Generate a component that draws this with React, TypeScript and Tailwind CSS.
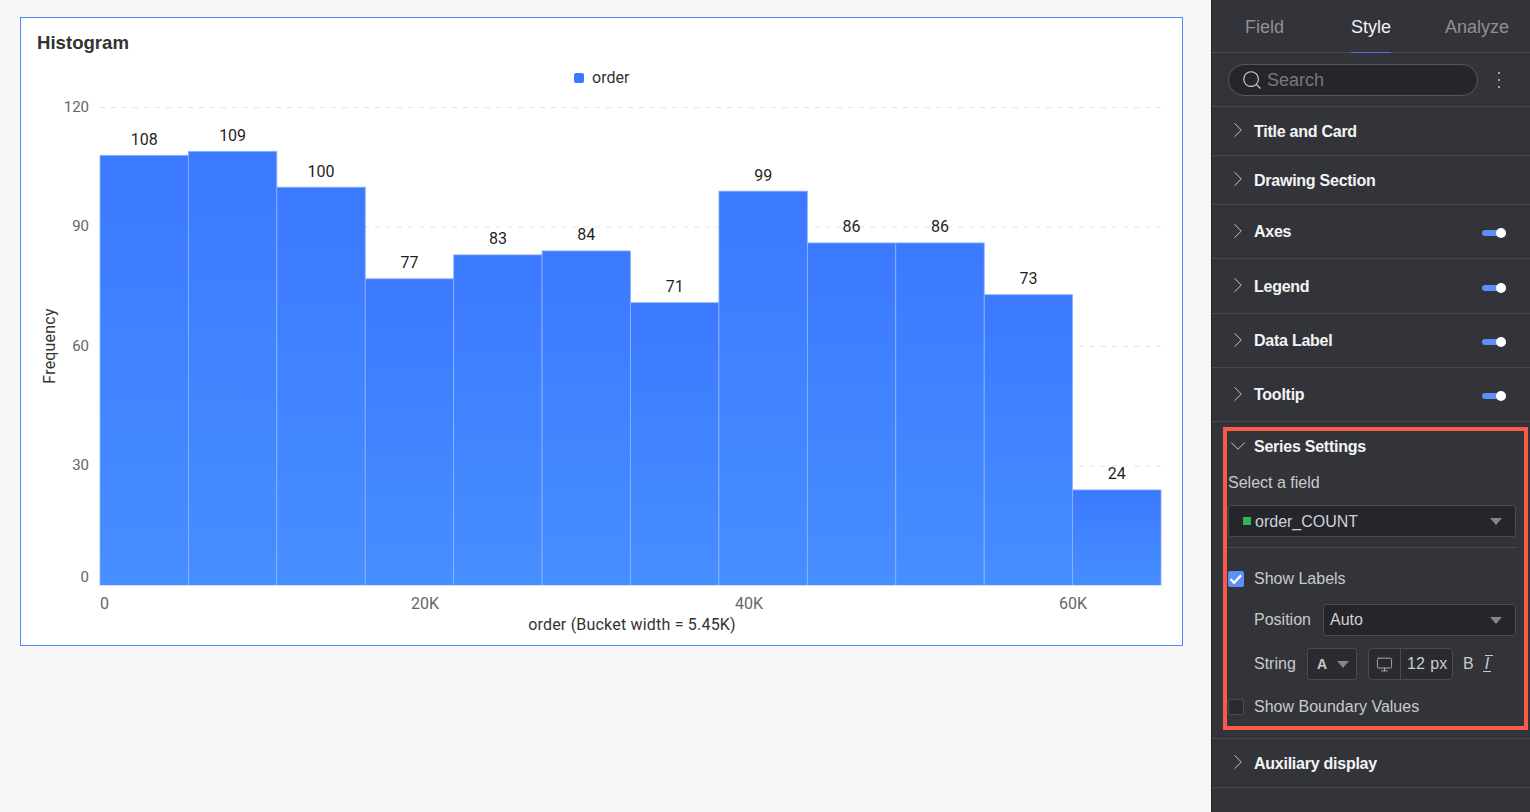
import { ChevronDown, ChevronRight, Monitor, Search } from "lucide-react";

const BARS = [108, 109, 100, 77, 83, 84, 71, 99, 86, 86, 73, 24];
const BAR_W = 88.42;
const X0 = 100;
// svg starts 60px below the page top, 21px from the left
const OX = 21;
const OY = 60;
const BASE = 585.5;
const SCALE = 478 / 120;

function Chart() {
  return (
    <svg width={1161} height={584} className="block" style={{ fontFamily: "Roboto, sans-serif" }}>
      <defs>
        <linearGradient id="bar" x1="0" y1="0" x2="0" y2="1">
          <stop offset="0" stopColor="#3b79ff" />
          <stop offset="1" stopColor="#478eff" />
        </linearGradient>
      </defs>
      <g transform={`translate(${-OX} ${-OY})`}>
        <rect x={574} y={73} width={10} height={10} rx={2} fill="#3b79ff" />
        <text x={592} y={83} fontSize={16} fill="#333">order</text>

        {[120, 90, 60, 30].map((v) => (
          <line key={v} x1={100} x2={1161} y1={BASE - v * SCALE} y2={BASE - v * SCALE} stroke="#e3e3e3" strokeDasharray="5 6" />
        ))}
        {[
          ["120", 112],
          ["90", 231],
          ["60", 351],
          ["30", 470],
          ["0", 582],
        ].map(([v, y]) => (
          <text key={v} x={89} y={y} textAnchor="end" fontSize={15} fill="#666">{v}</text>
        ))}

        {BARS.map((v, i) => {
          const x = X0 + i * BAR_W;
          const y = BASE - v * SCALE;
          return (
            <g key={i}>
              <rect x={x} y={y} width={BAR_W} height={v * SCALE} fill="url(#bar)" stroke="#8db4ff" strokeWidth={0.8} />
              <text x={x + BAR_W / 2} y={y - 10.5} textAnchor="middle" fontSize={16} fill="#1f1f1f">{v}</text>
            </g>
          );
        })}
        <line x1={100} x2={1161} y1={585.5} y2={585.5} stroke="#d5e2fb" />

        <text x={100} y={609} fontSize={16} fill="#666">0</text>
        <text x={425} y={609} textAnchor="middle" fontSize={16} fill="#666">20K</text>
        <text x={749} y={609} textAnchor="middle" fontSize={16} fill="#666">40K</text>
        <text x={1073} y={609} textAnchor="middle" fontSize={16} fill="#666">60K</text>
        <text x={632} y={630} textAnchor="middle" fontSize={16} letterSpacing={0.2} fill="#333">order (Bucket width = 5.45K)</text>
        <text transform="translate(55 346) rotate(-90)" textAnchor="middle" fontSize={16} letterSpacing={0.2} fill="#333">Frequency</text>
      </g>
    </svg>
  );
}

function Toggle() {
  return (
    <span className="relative ml-auto mr-[24px] mt-[3px] block h-[6px] w-[24px] rounded-full bg-[#5b8ff9]">
      <span className="absolute right-0 top-[-2px] h-[10px] w-[10px] rounded-full bg-white" />
    </span>
  );
}

function Row({ label, height, toggle, low }: { label: string; height: string; toggle?: boolean; low?: boolean }) {
  return (
    <div className={`flex items-center border-b border-[#47484d] pl-[13px] ${height}`}>
      <ChevronRight size={26} strokeWidth={0.9} className="mr-[3px] mt-[-2px] shrink-0 text-[#c9c9cb]" />
      <span className={`text-[16px] font-bold tracking-[-0.25px] text-[#f4f4f5] ${low ? "pt-[2px]" : ""}`}>{label}</span>
      {toggle && <Toggle />}
    </div>
  );
}

function Caret() {
  return <span className="block h-0 w-0 border-x-[6px] border-t-[7px] border-x-transparent border-t-[#83848c]" />;
}

function Sidebar() {
  return (
    <aside className="h-[812px] w-[319px] shrink-0 overflow-hidden border-l border-[#222] bg-[#33343a] font-['Liberation_Sans',sans-serif]">
      <div className="flex h-[53px] border-b border-[#4b4c51] text-[18px]">
        <span className="ml-[33px] mt-[14px] text-[#8f9095]">Field</span>
        <span className="relative ml-[67px] mt-[14px] h-[38px] text-[#f2f2f3]">
          Style
          <span className="absolute bottom-[-1px] left-0 h-[1px] w-full bg-[#5b6fd6]" />
        </span>
        <span className="ml-[54px] mt-[14px] text-[#8f9095]">Analyze</span>
      </div>
      <div className="flex h-[54px] items-center border-b border-[#47484d] pl-[16px]">
        <div className="flex h-[32px] w-[250px] items-center rounded-full border border-[#55565b] bg-[#25262c] pl-[12px]">
          <Search size={22} strokeWidth={1.2} className="text-[#d6d6d8]" />
          <span className="ml-[4px] pt-px text-[18px] text-[#77787e]">Search</span>
        </div>
        <span className="ml-[20px] flex flex-col gap-[5px]">
          <span className="h-[2px] w-[2px] rounded-full bg-[#c9c9cb]" />
          <span className="h-[2px] w-[2px] rounded-full bg-[#c9c9cb]" />
          <span className="h-[2px] w-[2px] rounded-full bg-[#c9c9cb]" />
        </span>
      </div>
      <Row label="Title and Card" height="h-[49px]" low />
      <Row label="Drawing Section" height="h-[49px]" low />
      <Row label="Axes" height="h-[54px]" toggle />
      <Row label="Legend" height="h-[55px]" toggle low />
      <Row label="Data Label" height="h-[54px]" toggle />
      <Row label="Tooltip" height="h-[54px]" toggle />

      <div className="h-[317px] border-b border-[#47484d] pl-[11px] pr-[2px] pt-[5px]">
        <div className="h-[303px] border-4 border-[#fb5a4a] pl-[1px] text-[16px] text-[#c9cacc]">
          <div className="flex h-[32px] items-center">
            <ChevronDown size={26} strokeWidth={0.9} className="mr-[3px] mt-[-3px] text-[#c9c9cb]" style={{ marginLeft: -3 }} />
            <span className="font-bold tracking-[-0.25px] text-[#f4f4f5]">Series Settings</span>
          </div>
          <div className="mt-[10px] h-[20px] leading-[20px]">Select a field</div>
          <div className="mt-[12px] flex h-[32px] w-[288px] items-center rounded-[3px] border border-[#4b4c51] bg-[#25262c] pl-[14px] pr-[13px]">
            <span className="mr-[4px] h-[8px] w-[8px] bg-[#2db84d]" />
            <span className="pt-[2px] text-[#d0d1d3]">order_COUNT</span>
            <span className="ml-auto"><Caret /></span>
          </div>
          <div className="mt-[10px] h-px w-[288px] bg-[#4b4c51]" />
          <div className="mt-[21px] flex h-[20px] items-center">
            <span className="flex h-[16px] w-[16px] items-center justify-center rounded-[2px] bg-[#5b8ff9]">
              <svg width={16} height={16} viewBox="0 0 16 16" fill="none" stroke="#fff" strokeWidth={2.2}>
                <path d="M2.5 8l3.6 3.8 7-7.6" />
              </svg>
            </span>
            <span className="ml-[10px]">Show Labels</span>
          </div>
          <div className="mt-[15px] flex h-[32px] items-center pl-[26px]">
            <span className="w-[69px]">Position</span>
            <div className="flex h-[32px] w-[193px] items-center rounded-[3px] border border-[#4b4c51] bg-[#25262c] pl-[6px] pr-[13px]">
              <span className="text-[#d0d1d3]">Auto</span>
              <span className="ml-auto"><Caret /></span>
            </div>
          </div>
          <div className="mt-[12px] flex h-[32px] items-center pl-[26px]">
            <span className="w-[53px]">String</span>
            <div className="flex h-[32px] w-[50px] items-center rounded-[3px] border border-[#4b4c51] bg-[#2a2b31] pl-[9px]">
              <span className="text-[14px] font-bold">A</span>
              <span className="ml-[10px]"><Caret /></span>
            </div>
            <div className="ml-[11px] flex h-[32px] w-[85px] items-center rounded-[4px] border border-[#4b4c51] bg-[#2a2b31]">
              <span className="flex h-full w-[32px] items-center justify-center border-r border-[#4b4c51]">
                <Monitor size={17} strokeWidth={1.1} />
              </span>
              <span className="ml-[6px] whitespace-nowrap [word-spacing:1px]">12 px</span>
            </div>
            <span className="ml-[10px] text-[#c9cacc]">B</span>
            <span className="relative ml-[11px] italic text-[#c9cacc]">
              I
              <span className="absolute left-[0px] top-[3px] h-px w-[8px] bg-[#c9cacc]" />
              <span className="absolute bottom-[4px] left-[-2px] h-px w-[8px] bg-[#c9cacc]" />
            </span>
          </div>
          <div className="mt-[17px] flex h-[20px] items-center">
            <span className="h-[16px] w-[16px] rounded-[2px] border border-[#4b4c51] bg-[#2a2b31]" />
            <span className="ml-[10px]">Show Boundary Values</span>
          </div>
        </div>
      </div>

      <Row label="Auxiliary display" height="h-[49px]" low />
    </aside>
  );
}

export default function App() {
  return (
    <div className="flex h-[812px] w-[1530px] overflow-hidden bg-[#f8f8f8]">
      <main className="flex-1 pl-[20px] pt-[17px]">
        <div className="h-[629px] w-[1163px] border border-[#4d8bff] bg-white font-['Liberation_Sans',sans-serif]">
          <div className="h-[42px] pl-[16px] pt-[13px] text-[18.6px] font-bold leading-[24px] text-[#333]">Histogram</div>
          <Chart />
        </div>
      </main>
      <Sidebar />
    </div>
  );
}
